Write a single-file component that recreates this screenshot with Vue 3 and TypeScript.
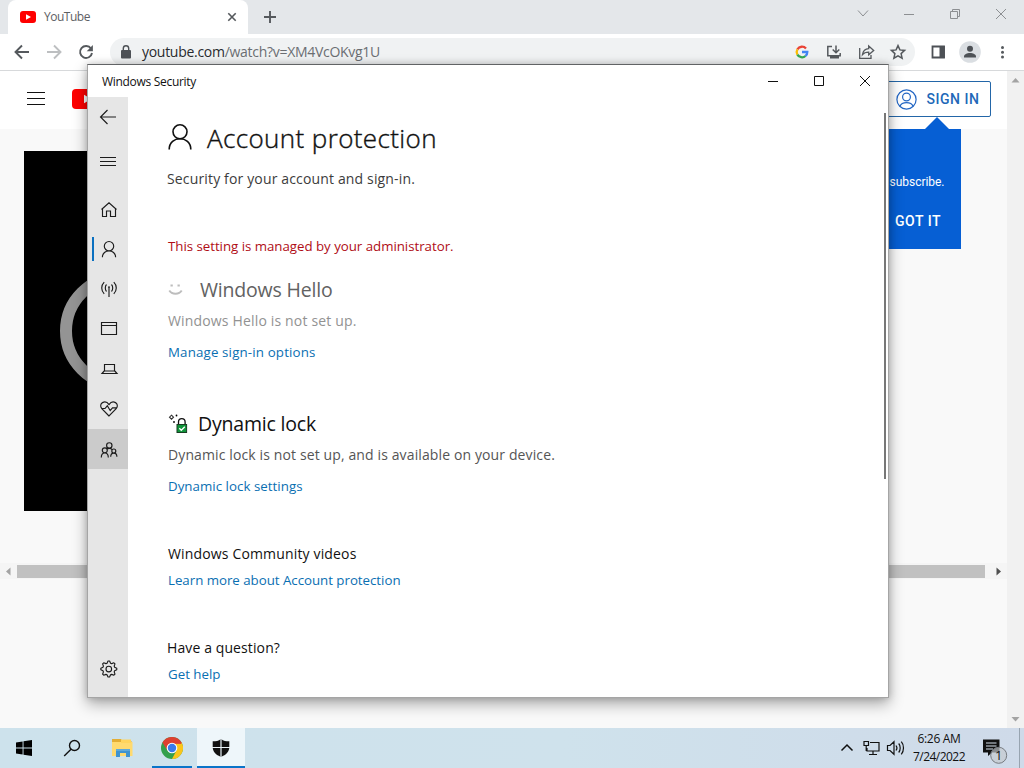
<script setup lang="ts">
interface NavItem { id: string; paths: string[]; active?: boolean; hover?: boolean }

// Stretches or tightens the tracking so a label occupies the given width.
const vFit = {
  mounted(el: HTMLElement, binding: { value: number }) {
    const count = (el.textContent ?? '').length
    const natural = el.getBoundingClientRect().width
    el.style.letterSpacing = `${((binding.value - natural) / count).toFixed(3)}px`
  },
}

const nav: NavItem[] = [
  { id: 'back', paths: ['M20 12H4.5M11.5 5L4.5 12L11.5 19'] },
  { id: 'menu', paths: ['M4 8.5H20M4 12.5H20M4 16.5H20'] },
  { id: 'home', paths: ['M6.5 11V19.5H10.5V14H14.5V19.5H19.5V11M5.5 12.5L13 5.7L20.5 12.5'] },
  { id: 'account', active: true, paths: ['M13 4.5a4.7 4.7 0 1 0 0 9.4a4.7 4.7 0 1 0 0-9.4M6.4 20.2c0-8.4 13.2-8.4 13.2 0'] },
  { id: 'network', paths: ['M13 10V20M10.5 7.5c-1.6 1.7-1.6 5.3 0 7M8.2 5.2c-3.3 3.3-3.3 8.3 0 11.6M15.5 7.5c1.6 1.7 1.6 5.3 0 7M17.8 5.2c3.3 3.3 3.3 8.3 0 11.6M12 10h2'] },
  { id: 'apps', paths: ['M5.5 5.5H20.5V17.5H5.5ZM5.5 8.5H20.5'] },
  { id: 'device', paths: ['M8.500 7.500H18.500V14H8.500ZM8.200 14L6 16.500H21L18.800 14'] },
  { id: 'health', paths: ['M13 19L5.8 11.6C1.8 6.4 9.3 2.2 13 7.6C16.7 2.2 24.2 6.4 20.2 11.6ZM5.8 11.5H9L11.3 8.8L14.2 13.5L16.5 10.8H20.4'] },
  { id: 'family', hover: true, paths: ['M13.300 5.700a2.700 2.700 0 1 0 0 5.400a2.700 2.700 0 1 0 0-5.400M8.800 10.800a2.500 2.500 0 1 0 0 5a2.500 2.500 0 1 0 0-5M17.800 12a2 2 0 1 0 0 4a2 2 0 1 0 0-4M5.300 20.500c0-6 7-6 7 0M14.700 19.800c0-5 6.200-5 6.200 0M10.500 12.600c1.600-1.800 4.600-1.600 5.700.3'] },
]
const gear = Array.from({ length: 32 }, (_, i) => {
  const r = i % 4 < 2 ? 8 : 6.1
  const a = ((i - 0.5) * Math.PI) / 16
  return `${(12.8 + r * Math.cos(a)).toFixed(2)},${(12 + r * Math.sin(a)).toFixed(2)}`
}).join(' ')
</script>

<template>
  <div class="desktop">
    <div class="browser">
      <div class="tabs">
        <div class="tab">
          <svg class="fav" width="16" height="12" viewBox="0 0 16 12"><rect width="16" height="12" rx="3" fill="#f00" /><path d="M6 3.300v5.400L11 6z" fill="#fff" /></svg>
          <span class="tabname"><span v-fit="46">YouTube</span></span>
          <svg class="tabx" width="10" height="10" viewBox="0 0 10 10"><path d="M1.300 1.300l7.400 7.400M8.700 1.300L1.300 8.700" stroke="#54585c" stroke-width="1.600" /></svg>
        </div>
        <svg class="plus" width="14" height="14" viewBox="0 0 14 14"><path d="M7 1v12M1 7h12" stroke="#55595d" stroke-width="1.900" /></svg>
        <svg class="caption" width="160" height="20" viewBox="0 0 160 20" fill="none" stroke="#8c8f92">
          <path d="M6 7.500l5 5.500L16 7.500M52 11.500h10M98.500 8.500h7v7h-7zM100.500 8.500v-2h7v7h-2M144 6l10 10M154 6l-10 10" />
        </svg>
      </div>
      <div class="toolbar">
        <svg width="110" height="36" viewBox="0 0 110 36" fill="none" stroke-width="1.900">
          <path d="M29 18H16M22 11.500L15.500 18l6.500 6.500" stroke="#55595d" />
          <path d="M47 18h13M54 11.500l6.500 6.500l-6.500 6.500" stroke="#bdbfc1" />
          <path d="M91 14.500A6 6 0 1 0 92 19" stroke="#55595d" /><path d="M92.900 11v6.200h-6.200z" fill="#55595d" />
        </svg>
        <div class="omni">
          <svg width="10" height="14" viewBox="0 0 10 14"><rect y="5" width="10" height="8.500" rx="1" fill="#4d5156" /><path d="M2.300 6V3.500a2.700 2.700 0 0 1 5.400 0V6" fill="none" stroke="#4d5156" stroke-width="1.400" /></svg>
          <span class="url"><span v-fit="238"><b>youtube.com</b>/watch?v=XM4VcOKvg1U</span></span>
          <svg class="omni-icons" width="128" height="28" viewBox="0 0 128 28" fill="none" stroke="#55595d" stroke-width="1.500">
            <g stroke-width="2.300">
              <path d="M20 10.600A5.300 5.300 0 0 0 11.400 11.300" stroke="#ea4335" />
              <path d="M11.400 11.300A5.300 5.300 0 0 0 11.400 16.600" stroke="#fbbc05" />
              <path d="M11.400 16.600A5.300 5.300 0 0 0 19.500 18" stroke="#34a853" />
              <path d="M19.500 18A5.300 5.300 0 0 0 21.300 14H16" stroke="#4285f4" />
            </g>
            <path d="M46 8.500h-4.200v9.200h12.400V15M50 7.500v7M46.700 11.500L50 14.800l3.300-3.300" /><path d="M44 18h9v2.500h-9z" fill="#55595d" stroke="none" />
            <path d="M73.700 10v10.300H85V17M76.500 16.500c.6-4 3-5.800 6.200-5.900V8l5 4.500l-5 4.300v-2.700c-3 0-4.800.7-6.200 2.400z" stroke-width="1.300" />
            <path d="M112 7.600l1.900 4.300l4.700.5l-3.500 3.200l1 4.600l-4.100-2.400l-4.100 2.400l1-4.600l-3.500-3.200l4.700-.5z" />
          </svg>
        </div>
        <svg class="tools" width="90" height="36" viewBox="0 0 90 36">
          <path d="M8.500 12.500H20v11H8.500z" fill="none" stroke="#4d5156" stroke-width="1.800" /><path d="M15.500 12h5.300v12h-5.300z" fill="#4d5156" />
          <circle cx="46" cy="18" r="10.800" fill="#dadee2" /><circle cx="46" cy="14.700" r="3" fill="#4d5156" /><path d="M40 23.500v-1c0-4.800 12-4.800 12 0v1z" fill="#4d5156" />
          <g fill="#55595d"><circle cx="78.500" cy="13.500" r="1.500" /><circle cx="78.500" cy="18.300" r="1.500" /><circle cx="78.500" cy="23" r="1.500" /></g>
        </svg>
      </div>
      <div class="page">
        <div class="canvas">
          <div class="masthead">
            <svg class="burger" width="18" height="14" viewBox="0 0 18 14"><path d="M0 .5h18M0 6.500h18M0 12.500h18" stroke="#111" /></svg>
            <svg class="logo" width="30" height="20" viewBox="0 0 30 20"><rect width="30" height="20" rx="4" fill="#f00" /><path d="M12 5.800v8.400l7.500-4.200z" fill="#fff" /></svg>
            <div class="signin">
              <svg width="21" height="21" viewBox="0 0 21 21" fill="none" stroke="#2366c4" stroke-width="1.200"><circle cx="10.500" cy="10.500" r="9.600" /><circle cx="10.500" cy="8" r="3.900" /><path d="M4 17.300c1.800-4.800 11.200-4.800 13 0" /></svg>
              <span class="signtext"><span v-fit="53">SIGN IN</span></span>
            </div>
          </div>
          <div class="player">
            <svg width="120" height="120" viewBox="0 0 120 120"><circle cx="60" cy="60" r="54" fill="none" stroke="#949494" stroke-width="12" /></svg>
          </div>
          <div class="promo">
            <span class="sub"><span v-fit="55">subscribe.</span></span>
            <span class="got"><span v-fit="46">GOT IT</span></span>
          </div>
          <div class="hscroll">
            <svg width="17" height="16" viewBox="0 0 17 16"><path d="M10.500 4.500v8L6 8.500z" fill="#a3a3a3" /></svg>
            <div class="hthumb"></div>
            <svg width="22" height="16" viewBox="0 0 22 16"><path d="M11.500 4.500v8L16 8.500z" fill="#505050" /></svg>
          </div>
        </div>
        <div class="vscroll">
          <svg width="17" height="16" viewBox="0 0 17 16"><path d="M4.500 11.500h8L8.500 7z" fill="#a3a3a3" /></svg>
          <svg width="17" height="16" viewBox="0 0 17 16"><path d="M4.500 5h8L8.500 9.500z" fill="#a3a3a3" /></svg>
        </div>
      </div>
    </div>

    <div class="taskbar">
      <div class="task"><svg width="16" height="16" viewBox="0 0 16 16"><path d="M0 2.400l6.600-.9v6H0zM7.500 1.300L16 0v7.500H7.500zM0 8.400h6.600v6L0 13.600zM7.500 8.400H16V16l-8.500-1.200z" /></svg></div>
      <div class="task"><svg width="18" height="18" viewBox="0 0 18 18" fill="none" stroke="#111" stroke-width="1.400"><circle cx="11.500" cy="6.500" r="5" /><path d="M8 10.200L1.200 17" /></svg></div>
      <div class="task folder"><svg width="24" height="20" viewBox="0 0 24 20"><path d="M1 1h9l2 2.500h9V18H1z" fill="#e3ae35" /><path d="M1 4h20.500V18H1z" fill="#ffda6f" /><path d="M10 1.500h10V5H10z" fill="#ffd45c" /><path d="M5 11h14v8h-4v-4H9v4H5z" fill="#3f94cf" /><path d="M5 11h14v2H5z" fill="#60a9d8" /></svg></div>
      <div class="task chrome">
        <svg width="22" height="22" viewBox="0 0 24 24"><circle cx="12" cy="12" r="12" fill="#34a04c" /><path d="M1.600 6A12 12 0 0 1 22.400 6L12 12z" fill="#dd4030" /><path d="M1.600 6L7.200 15L12 12V6z" fill="#dd4030" /><path d="M22.400 6A12 12 0 0 1 12 24L17 14.500L12 6.500z" fill="#fbc51b" /><path d="M12 5.500H22.200V7.500H12z" fill="#dd4030" /><circle cx="12" cy="12" r="5.800" fill="#fff" /><circle cx="12" cy="12" r="4.600" fill="#3a7bea" /></svg>
      </div>
      <div class="task shield"><svg width="18" height="18" viewBox="0 0 18 18"><path d="M9 0c2.500 2 5 2.300 8.300 2.300V8c0 5-3.300 7.700-8.300 10C4 15.700.7 13 .7 8V2.300C4 2.300 6.500 2 9 0z" fill="#111" /><path d="M9 0v18M0 8.500h18" stroke="#eaf3f8" stroke-width="1.200" /></svg></div>
      <div class="tray">
        <svg width="70" height="20" viewBox="0 0 70 20" fill="none" stroke="#111" stroke-width="1.200">
          <path d="M1.500 12.500L7 7l5.500 5.500" stroke-width="1.500" />
          <path d="M30 4.500h9v8.500H27v-3M33 13v3.500M29 16.500h8M24 3.500h4.500v4H24zM26.200 7.500V13" />
          <path d="M47.500 7.500h2.500l4-3.800v12.600l-4-3.800h-2.500zM56 7.500c1 1.300 1 3.700 0 5M58.700 5.500c2 2.300 2 6.700 0 9M61.300 3.700c2.900 3.300 2.900 9.300 0 12.600" />
        </svg>
        <div class="clock"><span><span v-fit="43">6:26 AM</span></span><span><span v-fit="52">7/24/2022</span></span></div>
        <div class="notice">
          <svg width="26" height="28" viewBox="0 0 26 28"><path d="M0 2.500h16.500v13H9l-4 3.500V15.500H0z" fill="#111" /><path d="M3 6h10.500M3 9h10.500M3 12h7" stroke="#d5dfea" /><circle cx="15.700" cy="18.300" r="8" fill="#c4c9ceaa" stroke="#777b80" /></svg>
          <span class="badge">1</span>
        </div>
        <div class="peek"></div>
      </div>
    </div>

    <div class="window">
      <div class="titlebar">
        <span><span v-fit="94">Windows Security</span></span>
        <svg width="104" height="14" viewBox="0 0 104 14" fill="none" stroke="#111" stroke-width="1"><path d="M0 7.500h10M46.500 2.500h9v9h-9zM92 2l10 10M102 2L92 12" /></svg>
      </div>
      <div class="body">
        <div class="side">
          <div v-for="n in nav" :key="n.id" class="item" :class="{ active: n.active, hover: n.hover, [n.id]: true }">
            <svg width="24" height="24" viewBox="0 0 24 24" fill="none" stroke="#1c1c1c" stroke-width="1.150"><path v-for="p in n.paths" :key="p" :d="p" /></svg>
          </div>
          <div class="item gear">
            <svg width="24" height="24" viewBox="0 0 24 24" fill="none" stroke="#1c1c1c" stroke-width="1.150" stroke-linejoin="round"><polygon :points="gear" /><circle cx="12.800" cy="12" r="2.800" /></svg>
          </div>
        </div>
        <div class="content">
          <h1><svg width="24" height="28" viewBox="0 0 24 28" fill="none" stroke="#111" stroke-width="1.600"><circle cx="12" cy="8.800" r="7" /><path d="M1.200 26.500c0-14.300 21.600-14.300 21.600 0" /></svg><span v-fit="230">Account protection</span></h1>
          <p class="lead"><span v-fit="248">Security for your account and sign-in.</span></p>
          <p class="warn"><span v-fit="285.500">This setting is managed by your administrator.</span></p>
          <h2 class="hello"><svg width="16" height="16" viewBox="0 0 16 16" fill="none" stroke="#bdbdbd" stroke-width="1.900"><path d="M1.300 8.500c2.500 4.300 9.900 4.300 12.400 0M2.500 3.500h2.300M9.500 3.500h2.300" /></svg><span v-fit="132.500">Windows Hello</span></h2>
          <p class="muted"><span v-fit="188.500">Windows Hello is not set up.</span></p>
          <p class="link"><span v-fit="147.500">Manage sign-in options</span></p>
          <h2 class="dynamic"><svg width="20" height="20" viewBox="0 0 20 20"><path d="M10.500 11V8a3.300 3.300 0 0 1 6.600 0v3" fill="none" stroke="#111" stroke-width="1.300" /><rect x="9" y="10.500" width="9.600" height="8" fill="#10943a" stroke="#183d22" /><path d="M11.300 14.300l2 2l3.500-3.500" fill="none" stroke="#fff" stroke-width="1.300" /><path d="M3.500 1.200l2 2l-2 2l-2-2z" fill="none" stroke="#333" stroke-width="1.100" /><circle cx="8.500" cy="1.500" r=".9" /><circle cx="6" cy="8" r=".9" /></svg><span v-fit="118">Dynamic lock</span></h2>
          <p class="desc"><span v-fit="387">Dynamic lock is not set up, and is available on your device.</span></p>
          <p class="link"><span v-fit="134.500">Dynamic lock settings</span></p>
          <p class="sub1"><span v-fit="188.500">Windows Community videos</span></p>
          <p class="link near"><span v-fit="232.500">Learn more about Account protection</span></p>
          <p class="sub2"><span v-fit="113">Have a question?</span></p>
          <p class="link near"><span v-fit="52.500">Get help</span></p>
        </div>
        <div class="scroll"></div>
      </div>
    </div>
  </div>
</template>

<style>
html, body { margin: 0; overflow: hidden; }
</style>
<style scoped>
* { box-sizing: border-box; }
svg { display: block; flex: none; }
span { white-space: nowrap; display: inline-block; }
.desktop { position: relative; width: 1024px; height: 768px; overflow: hidden; font-family: "Open Sans", "Noto Sans", sans-serif; display: flex; flex-direction: column; }
.browser { height: 728px; display: flex; flex-direction: column; }
.tabs { height: 34px; background: #e4e7ea; display: flex; align-items: center; padding-left: 8px; }
.tab { width: 240px; height: 34px; background: #fff; border-radius: 8px 8px 0 0; display: flex; align-items: center; padding: 0 11px 0 12px; }
.tabname { margin-left: 8px; font-size: 12px; color: #5d6064; flex: 1; margin-top: -1px; }
.plus { margin-left: 15px; }
.caption { margin-left: auto; margin-right: 12px; margin-bottom: 8px; }
.toolbar { height: 37px; background: #fff; border-bottom: 1px solid #d7d9db; display: flex; align-items: center; }
.omni { width: 805px; height: 28px; border-radius: 14px; background: #f0f2f3; display: flex; align-items: center; padding-left: 11px; }
.url { margin: -1px 0 0 11px; font-size: 14px; color: #6b6e72; }
.url b { font-weight: 400; color: #292b2e; }
.omni-icons { margin-left: auto; margin-right: 1px; }
.tools { margin-left: 9px; }
.page { flex: 1; display: flex; background: #f9f9f9; }
.canvas { flex: 1; display: flex; flex-direction: column; }
.masthead { height: 58px; background: #fff; display: flex; align-items: center; padding: 0 16px 2px 27px; }
.logo { margin-left: 27px; }
.signin { margin-left: auto; width: 120px; height: 36px; border: 1px solid #2366a8; border-radius: 2px; display: flex; align-items: center; padding-left: 23.500px; }
.signtext { margin-left: 10px; font: 500 14px Roboto, sans-serif; color: #2168b8; }
.player { width: 600px; height: 360px; margin: 22px 0 0 24px; background: #000; display: flex; align-items: center; padding-left: 36px; }
.promo { position: absolute; left: 660px; top: 129px; width: 301px; height: 120px; background: #065fd4; color: #fff; display: flex; flex-direction: column; padding: 42px 0 0 229.500px; font-family: Roboto, sans-serif; }
.promo::before { content: ""; position: absolute; left: 265px; top: -12px; border: 12px solid transparent; border-top: 0; border-bottom-color: #065fd4; }
.sub { font-size: 12px; line-height: 22px; }
.got { font-size: 14px; font-weight: 500; line-height: 20px; margin: 18px 0 0 5.500px; }
.hscroll { height: 16px; margin-top: 52px; display: flex; align-items: center; background: #f5f5f5; }
.hthumb { flex: 1; height: 13px; background: #c1c1c1; }
.vscroll { width: 17px; background: #f1f1f1; display: flex; flex-direction: column; justify-content: space-between; }
.taskbar { height: 40px; background: linear-gradient(90deg, #cde2ec, #cfe2ec 55%, #cfdae9); display: flex; }
.task { width: 48px; height: 40px; display: flex; align-items: center; justify-content: center; }
.folder { margin-left: 3px; }
.chrome { width: 40px; margin-left: 5px; border-bottom: 2px solid #0a74c9; padding-top: 2px; }
.shield { margin-left: 5px; background: #eef6fa; border-bottom: 2px solid #0a74c9; padding-top: 2px; }
.tray { margin-left: auto; display: flex; align-items: center; }
.clock { width: 66px; text-align: center; margin: 0 3px 0 -4px; font-size: 12px; line-height: 18px; color: #111; display: flex; flex-direction: column; align-items: center; padding-bottom: 1px; }
.notice { width: 36px; margin-left: 8px; position: relative; top: 3px; }
.badge { position: absolute; left: 12px; top: 11px; font-size: 13px; line-height: 15px; color: #111; }
.peek { width: 5px; height: 40px; border-left: 1px solid #98a4b0; }
.window { position: absolute; left: 87px; top: 64px; width: 802px; height: 634px; background: #fff; border: 1px solid #a5a5a5; border-top-color: #616365; box-shadow: 0 6px 14px rgba(0,0,0,.32), 0 0 7px rgba(0,0,0,.18); display: flex; flex-direction: column; }
.titlebar { height: 32px; display: flex; justify-content: space-between; align-items: center; padding: 0 16px 0 14px; font-size: 12px; color: #111; }
.body { flex: 1; display: flex; }
.side { width: 40px; background: #e6e6e6; display: flex; flex-direction: column; padding-bottom: 8px; }
.item { height: 40px; padding-left: 8px; display: flex; align-items: center; }
.menu { margin-top: 4px; }
.home { margin-top: 8px; }
.active { border-left: 2px solid #0a70c0; height: 24px; margin: 8px 0 8px 4px; padding-left: 2px; }
.hover { background: #cbcbcb; }
.gear { margin-top: auto; }
.content { flex: 1; padding: 26px 0 0 40px; }
h1, h2, p { margin: 0; font-weight: 400; line-height: 20px; height: 20px; font-size: 14px; color: #111; display: flex; align-items: center; }
h1 { font-size: 26px; height: 30px; line-height: 30px; gap: 15px; font-weight: 300; -webkit-text-stroke: .4px #111; }
h1 svg { margin-top: -3px; }
.lead { margin: 16px 0 0 -1px; color: #3c3c3c; }
.warn { margin-top: 47px; font-size: 13.300px; color: #b00d16; }
.hello { margin-top: 24px; font-size: 19.500px; color: #626262; gap: 16px; }
.dynamic { margin-top: 52px; font-size: 19.500px; gap: 10px; }
.muted { margin-top: 11px; color: #929292; }
.desc { margin-top: 11px; color: #555; }
.link { margin-top: 11px; color: #0a6fb2; font-size: 13.300px; }
.near { margin-top: 6px; }
.sub1 { margin-top: 48px; }
.sub2 { margin: 48px 0 0 -1px; }
.scroll { width: 2px; height: 366px; margin: 16px 2px 0 0; background: #777; }
</style>
